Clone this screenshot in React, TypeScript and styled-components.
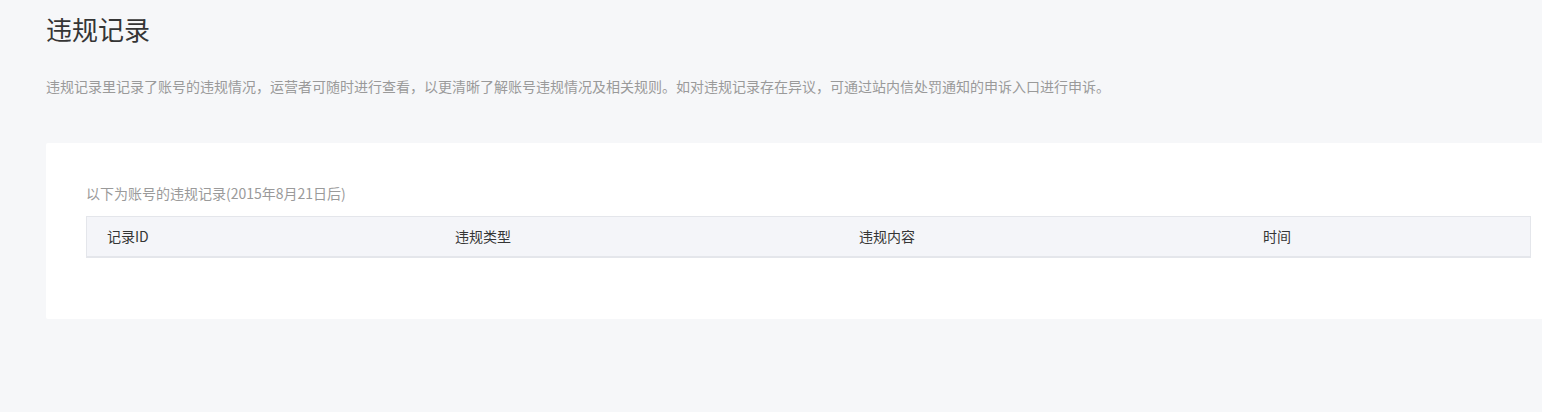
import React from "react";
import styled, { createGlobalStyle } from "styled-components";

const Global = createGlobalStyle`
  html, body {
    margin: 0;
    padding: 0;
    background: #f6f7f9;
    overflow: hidden;
  }
  body {
    font-family: "Noto Sans CJK SC", "Noto Sans", sans-serif;
  }
`;

const Page = styled.div`
  padding: 11px 0 0 46px;
  width: 1525px;
`;

const Title = styled.h1`
  margin: 0;
  font-size: 26px;
  line-height: 36px;
  font-weight: 400;
  color: #353535;
`;

const Desc = styled.p`
  margin: 29px 0 0;
  font-size: 14px;
  line-height: 20px;
  color: #9a9a9a;
  white-space: nowrap;
`;

const Card = styled.section`
  margin-top: 47px;
  background: #ffffff;
  padding: 40px 40px 61px;
  border-radius: 2px;
`;

const Caption = styled.div`
  font-size: 14px;
  line-height: 20px;
  color: #9a9a9a;
`;

const Table = styled.div`
  margin-top: 13px;
  border: 1px solid #e4e6eb;
  border-bottom-width: 2px;
  background: #f4f5f9;
  display: grid;
  grid-template-columns: 348px 404px 404px 1fr;
  height: 39px;
`;

const HeadCell = styled.div`
  padding-left: 20px;
  font-size: 14px;
  line-height: 39px;
  color: #353535;
`;

const columns = ["记录ID", "违规类型", "违规内容", "时间"];

export default function App() {
  return (
    <>
      <Global />
      <Page>
        <Title>违规记录</Title>
        <Desc>
          违规记录里记录了账号的违规情况，运营者可随时进行查看，以更清晰了解账号违规情况及相关规则。如对违规记录存在异议，可通过站内信处罚通知的申诉入口进行申诉。
        </Desc>
        <Card>
          <Caption>以下为账号的违规记录(2015年8月21日后)</Caption>
          <Table>
            {columns.map((c) => (
              <HeadCell key={c}>{c}</HeadCell>
            ))}
          </Table>
        </Card>
      </Page>
    </>
  );
}
